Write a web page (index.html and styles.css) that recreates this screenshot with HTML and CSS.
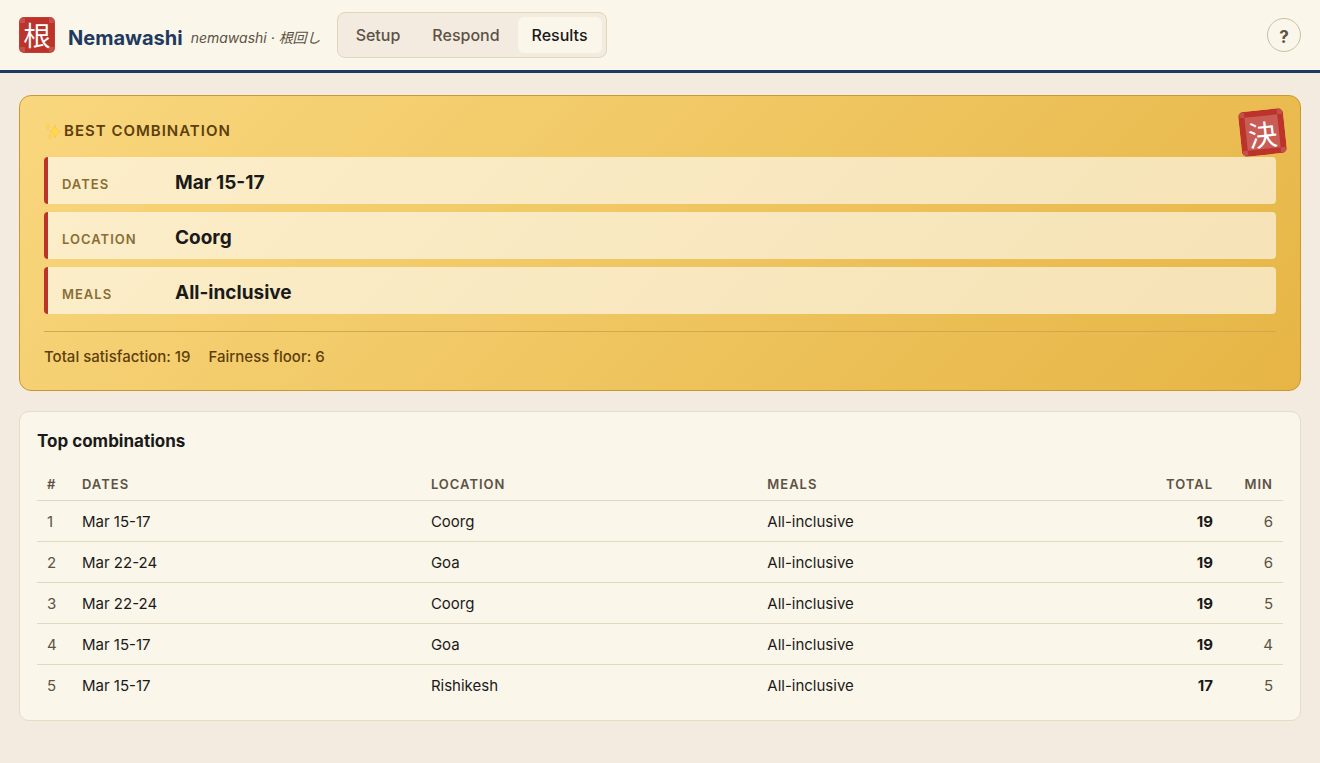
FILE: index.html
```html
<!DOCTYPE html>
<html lang="en">

<head>
    <meta charset="UTF-8">
    <meta name="viewport" content="width=device-width, initial-scale=1.0">
    <title>Nemawashi</title>
    <link rel="stylesheet" href="styles.css">
</head>

<body>
    <header class="header">
        <span class="seal" lang="ja">根</span>
        <div class="brand">
            <h1>Nemawashi</h1>
            <span class="tagline">nemawashi · <span lang="ja">根回し</span></span>
        </div>
        <nav class="tabs">
            <button type="button">Setup</button>
            <button type="button">Respond</button>
            <button type="button" class="active">Results</button>
        </nav>
        <button type="button" class="help" aria-label="Help">?</button>
    </header>

    <main class="main">
        <section class="best">
            <span class="seal seal-big" lang="ja">決</span>
            <h2>
                <svg class="sparkles" viewBox="0 0 20 20" aria-hidden="true">
                    <path fill="#ffdc3d" stroke="#fbbd5c" stroke-width=".6" d="M11 4 Q11.8 9.6 17 10.5 Q11.8 11.4 11 17 Q10.2 11.4 5 10.5 Q10.2 9.6 11 4Z"/>
                    <path fill="#ffdc3d" stroke="#fbbd5c" stroke-width=".5" d="M4 3 Q4.3 5.6 6.4 6 Q4.3 6.4 4 9 Q3.7 6.4 1.6 6 Q3.7 5.6 4 3Z"/>
                    <path fill="#ffdc3d" stroke="#fbbd5c" stroke-width=".5" d="M6 13 Q6.3 15.3 8.2 15.6 Q6.3 16 6 18.2 Q5.7 16 3.8 15.6 Q5.7 15.3 6 13Z"/>
                </svg>Best combination
            </h2>
            <dl class="picks">
                <div class="pick">
                    <dt>Dates</dt>
                    <dd>Mar 15-17</dd>
                </div>
                <div class="pick">
                    <dt>Location</dt>
                    <dd>Coorg</dd>
                </div>
                <div class="pick">
                    <dt>Meals</dt>
                    <dd>All-inclusive</dd>
                </div>
            </dl>
            <div class="scores">
                <span>Total satisfaction: 19</span>
                <span>Fairness floor: 6</span>
            </div>
        </section>

        <section class="card">
            <h3>Top combinations</h3>
            <table class="combos">
                <thead>
                    <tr>
                        <th class="rank">#</th>
                        <th class="dates">Dates</th>
                        <th class="location">Location</th>
                        <th>Meals</th>
                        <th class="total">Total</th>
                        <th class="min">Min</th>
                    </tr>
                </thead>
                <tbody>
                    <tr>
                        <td class="rank">1</td>
                        <td>Mar 15-17</td>
                        <td>Coorg</td>
                        <td>All-inclusive</td>
                        <td class="total">19</td>
                        <td class="min">6</td>
                    </tr>
                    <tr>
                        <td class="rank">2</td>
                        <td>Mar 22-24</td>
                        <td>Goa</td>
                        <td>All-inclusive</td>
                        <td class="total">19</td>
                        <td class="min">6</td>
                    </tr>
                    <tr>
                        <td class="rank">3</td>
                        <td>Mar 22-24</td>
                        <td>Coorg</td>
                        <td>All-inclusive</td>
                        <td class="total">19</td>
                        <td class="min">5</td>
                    </tr>
                    <tr>
                        <td class="rank">4</td>
                        <td>Mar 15-17</td>
                        <td>Goa</td>
                        <td>All-inclusive</td>
                        <td class="total">19</td>
                        <td class="min">4</td>
                    </tr>
                    <tr>
                        <td class="rank">5</td>
                        <td>Mar 15-17</td>
                        <td>Rishikesh</td>
                        <td>All-inclusive</td>
                        <td class="total">17</td>
                        <td class="min">5</td>
                    </tr>
                </tbody>
            </table>
        </section>
    </main>
</body>

</html>
```
FILE: styles.css
```css
* {
    box-sizing: border-box;
    margin: 0;
    padding: 0;
}

body {
    font-family: Inter, "Noto Sans CJK JP", sans-serif;
    font-size: 15px;
    line-height: 24px;
    color: #1a1a1a;
    background: #f3ebdf;
}

button {
    font: inherit;
    cursor: pointer;
}

/* header */
.header {
    display: flex;
    align-items: center;
    padding: 12px 19px;
    background: #faf6e9;
    border-bottom: 3px solid #1f3a5f;
}

.seal {
    display: flex;
    align-items: center;
    justify-content: center;
    width: 36px;
    height: 36px;
    border-radius: 5px;
    color: #fff;
    background-color: #bb332b;
    background-image:
        linear-gradient(#c5504a, #c5504a),
        linear-gradient(#c5504a, #c5504a),
        linear-gradient(#c5504a, #c5504a),
        linear-gradient(#c5504a, #c5504a);
    background-size: 5px 5px;
    background-position: 1px 1px, 30px 1px, 1px 30px, 30px 30px;
    background-repeat: no-repeat;
    box-shadow: inset 0 0 0 1px #c23f37;
    font-family: "Noto Sans CJK JP", sans-serif;
    font-size: 27px;
    line-height: 36px;
}

.brand {
    display: flex;
    align-items: center;
    gap: 8px;
    margin: 5px 16px 0 13px;
}

.brand h1 {
    font-size: 20px;
    font-weight: 700;
    color: #1f3a5f;
}

.tagline {
    font-size: 14px;
    font-style: italic;
    color: #5c5346;
}

.tabs {
    display: flex;
    gap: 4px;
    padding: 4px;
    background: #f3ebdf;
    border: 1px solid #e0d6bb;
    border-radius: 8px;
}

.tabs button {
    padding: 6px 14px;
    border: 0;
    border-radius: 6px;
    font-size: 16px;
    font-weight: 500;
    color: #5c5346;
    background: none;
}

.tabs .active {
    color: #1a1a1a;
    background: #faf6e9;
}

.help {
    width: 34px;
    height: 34px;
    margin-left: auto;
    padding-top: 4px;
    border: 1px solid #cbc0a3;
    border-radius: 50%;
    font-size: 17px;
    font-weight: 700;
    color: #5c5346;
    background: none;
}

.main {
    display: flex;
    flex-direction: column;
    gap: 20px;
    padding: 22px 19px;
}

/* best combination */
.best {
    position: relative;
    padding: 23px 24px 21px;
    background: linear-gradient(135deg, #f9d77e, #e6b545);
    border: 1px solid #c9982e;
    border-radius: 12px;
}

.seal-big {
    position: absolute;
    top: 14px;
    right: 15px;
    width: 45px;
    height: 45px;
    background-image:
        linear-gradient(#c5504a, #c5504a),
        linear-gradient(#c5504a, #c5504a),
        linear-gradient(#c5504a, #c5504a),
        linear-gradient(#c5504a, #c5504a),
        linear-gradient(#c95c55, #c95c55);
    background-size: 5px 5px, 5px 5px, 5px 5px, 5px 5px, 33px 33px;
    background-position: 1px 1px, 39px 1px, 1px 39px, 39px 39px, 6px 6px;
    box-shadow: none;
    font-size: 29px;
    transform: rotate(-6deg);
}

.best h2 {
    display: flex;
    align-items: center;
    margin-bottom: 14px;
    font-size: 15px;
    font-weight: 600;
    letter-spacing: 1px;
    text-transform: uppercase;
    color: #5c3f0c;
}

.sparkles {
    width: 20px;
    height: 20px;
}

.picks {
    display: flex;
    flex-direction: column;
    gap: 8px;
}

.pick {
    display: flex;
    align-items: baseline;
    gap: 12px;
    padding: 14px 14px 8px;
    background: rgba(255, 255, 255, 0.6);
    border-left: 4px solid #bb332b;
    border-radius: 4px;
}

.pick dt {
    width: 101px;
    font-size: 13px;
    font-weight: 600;
    letter-spacing: 1px;
    text-transform: uppercase;
    color: #8a6d36;
}

.pick dd {
    font-size: 19px;
    font-weight: 700;
}

.scores {
    display: flex;
    gap: 18px;
    margin-top: 17px;
    padding-top: 13px;
    border-top: 1px solid #d0a850;
    font-size: 15px;
    font-weight: 500;
    color: #5c3f0c;
}

/* results table */
.card {
    padding: 17px 17px 15px;
    background: #faf6e9;
    border: 1px solid #e6dcc4;
    border-radius: 10px;
}

.card h3 {
    margin-bottom: 13px;
    font-size: 17px;
    font-weight: 700;
}

.combos {
    width: 100%;
    table-layout: fixed;
    border-collapse: separate;
    border-spacing: 0;
}

.combos th,
.combos td {
    padding: 9px 10px 7px;
    text-align: left;
    border-bottom: 1px solid #e0d9bf;
}

.combos th {
    font-size: 13px;
    font-weight: 600;
    line-height: 18px;
    letter-spacing: 1px;
    text-transform: uppercase;
    color: #5c5346;
}

.combos tbody tr:last-child td {
    border-bottom: 0;
}

.combos .rank {
    width: 35px;
    color: #5c5346;
}

.combos .dates {
    width: 28%;
}

.combos .location {
    width: 27%;
}

.combos .total {
    width: 72px;
    text-align: right;
}

.combos td.total {
    font-weight: 700;
}

.combos .min {
    width: 60px;
    text-align: right;
    color: #5c5346;
}
```
